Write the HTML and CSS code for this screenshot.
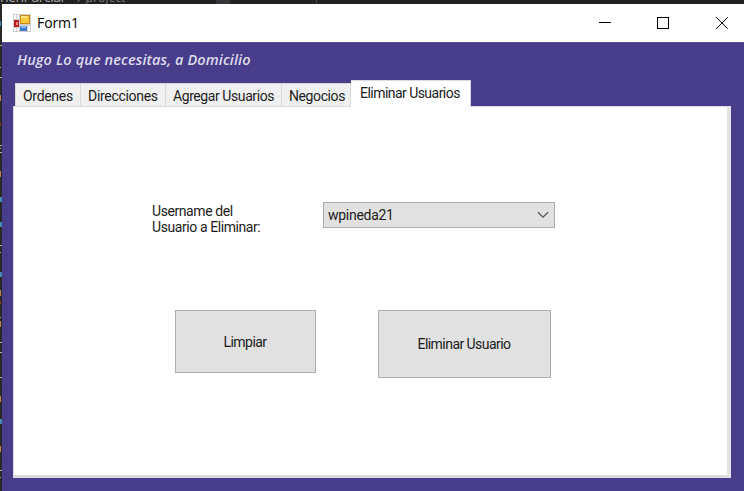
FILE: index.html
```html
<!DOCTYPE html>
<html lang="es">
<head>
<meta charset="utf-8">
<title>Form1</title>
<link rel="stylesheet" href="styles.css">
</head>
<body>
<div class="editor-top"><span class="file">nenParcial</span><span class="path">/ project</span></div>
<div class="desk">
  <svg class="editor-edge" width="2" height="487" viewBox="0 4 2 487" shape-rendering="crispEdges">
    <path stroke="#aaa" stroke-width="1" d="M0 45.500h2M0 67.500h1M0 77.500h2M0 145.500h2M0 148.500h1M0 152.500h2M0 245.500h2M0 252.500h1M0 317.500h1M0 342.500h2M0 352.500h2M0 377.500h2M0 470.500h2M0 477.500h1"/>
    <path stroke="#468bb4" stroke-width="5" d="M0 23h1M0 199h2M0 224h2M0 274h2M0 421h2"/>
    <path stroke="#b9824e" stroke-width="6" d="M0 98h1M0 174h1M0 293h1M0 324h1M0 399h1M0 449h1"/>
    <path stroke="#873724" stroke-width="3" d="M0 124h1M0 302h1"/>
  </svg>
  <div class="window">
    <header class="titlebar">
      <svg class="app-icon" width="18" height="18" viewBox="0 0 18 18">
        <rect width="18" height="18" fill="#cfcfcf"/>
        <path fill="#fff" d="M1 1h2v4H1zM4 1h2v4H4zM1 14h2v3H1zM4 14h2v3H4zM15 12h2v5h-2z"/>
        <rect x="7" y="1" width="10" height="9" fill="#c58a19"/>
        <rect x="8" y="2" width="8" height="7" fill="#f8c838"/>
        <path fill="#ffe68b" d="M8 2h6v2H8z"/>
        <rect x="1" y="6" width="5" height="7" fill="#b51f20"/>
        <path fill="#f08a7d" d="M3 8h2v3H3z"/>
        <rect x="7" y="12" width="7" height="5" fill="#3f7bd8"/>
        <path fill="#8bb6f3" d="M8 12h5v2H8z"/>
      </svg>
      <span class="title">Form1</span>
      <svg class="controls" width="132" height="14" viewBox="0 0 132 14" fill="none" stroke="#000">
        <path d="M0 6.500h12"/>
        <rect x="58.500" y="1.500" width="11" height="11"/>
        <path d="M117.200 1.200l11.600 11.600M128.800 1.200l-11.600 11.600"/>
      </svg>
    </header>
    <main class="client">
      <h1 class="slogan">Hugo Lo que necesitas, a Domicilio</h1>
      <nav class="tabs">
        <div class="tab ordenes">Ordenes</div>
        <div class="tab direcciones">Direcciones</div>
        <div class="tab agregar">Agregar Usuarios</div>
        <div class="tab negocios">Negocios</div>
        <div class="tab active">Eliminar Usuarios</div>
      </nav>
      <section class="page">
        <div class="field">
          <div class="label">Username del<br>Usuario a Eliminar:</div>
          <div class="combo"><span>wpineda21</span>
            <svg width="12" height="8" viewBox="0 0 12 8"><path d="M1 1.200l5 5 5-5" fill="none" stroke="#555" stroke-width="1.300"/></svg>
          </div>
        </div>
        <div class="actions">
          <button class="clear">Limpiar</button>
          <button class="remove">Eliminar Usuario</button>
        </div>
      </section>
    </main>
  </div>
</div>
</body>
</html>
```
FILE: styles.css
```css
* { box-sizing: border-box; }
body {
  margin: 0;
  width: 744px;
  height: 491px;
  overflow: hidden;
  background: #222;
  color: #1c1c1c;
  font: 14px/16px Roboto, "Liberation Sans", sans-serif;
}
.editor-top {
  height: 4px;
  overflow: hidden;
  display: flex;
  align-items: flex-end;
  gap: 14px;
  white-space: nowrap;
  background: linear-gradient(90deg, transparent 216px, #36363a 216px 230px, transparent 230px 316px, #444 316px 317px, transparent 317px);
  font: 14px/16px "Open Sans", sans-serif;
  color: #aaa;
}
.editor-top span { height: 15px; }
.file { width: 64px; letter-spacing: -0.5px; }
.path { font-size: 13px; font-style: italic; color: #777; }
.desk { display: flex; height: 487px; }
.editor-edge { flex: none; background: #292929; }
.window { width: 742px; display: flex; flex-direction: column; }
.titlebar {
  height: 38px;
  padding: 0 13px 0 11px;
  display: flex;
  align-items: center;
  background: #fff;
}
.app-icon { flex: none; }
.title {
  margin-left: 6px;
  font: 14px/20px "Open Sans", sans-serif;
  letter-spacing: -0.1px;
  color: #000;
}
.controls { margin-left: auto; }
.client {
  flex: 1;
  padding: 0 13px 12px 11px;
  border-top: 1px solid #5a4f98;
  background: #483d8b;
}
.slogan {
  margin: 0;
  height: 37px;
  padding: 7px 0 0 4px;
  font: italic 600 14.5px/20px "Open Sans", sans-serif;
  letter-spacing: 0.12px;
  color: #dedbea;
  white-space: nowrap;
}
.tabs {
  display: flex;
  align-items: flex-end;
  height: 26px;
  padding-left: 2px;
  white-space: nowrap;
}
.tab {
  height: 23px;
  padding: 4px 0 0 7px;
  border-top: 1px solid #d9d9d9;
  border-right: 1px solid #d9d9d9;
  background: #f0f0f0;
}
.ordenes {
  width: 66px;
  border-left: 1px solid #d9d9d9;
  letter-spacing: -0.3px;
}
.direcciones { width: 85px; letter-spacing: -0.3px; }
.agregar { width: 116px; letter-spacing: -0.42px; }
.negocios { width: 69px; letter-spacing: -0.4px; }
.active {
  width: 120px;
  height: 27px;
  margin-bottom: -1px;
  padding: 4px 0 0 9px;
  border: 1px solid #fff;
  border-top-color: #d9d9e6;
  border-right-color: #d9d9e6;
  border-bottom: 0;
  border-left: 0;
  background: #fff;
  letter-spacing: -0.54px;
  position: relative;
}
.page {
  height: 372px;
  border: solid #dcdcdc;
  border-width: 1px 4px 3px 1px;
  border-right-color: #e3e3e3;
  background: #fff;
}
.field { display: flex; padding: 95px 0 0 138px; }
.label { width: 171px; padding-top: 1px; letter-spacing: -0.42px; }
.combo {
  width: 232px;
  height: 26px;
  padding: 0 5px 0 4px;
  display: flex;
  align-items: center;
  justify-content: space-between;
  border: 1px solid #adadad;
  background: #e1e1e1;
  letter-spacing: -0.28px;
}
.actions { display: flex; align-items: flex-start; padding: 75px 0 0 161px; gap: 62px; }
button {
  padding: 0 1px 0 0;
  border: 1px solid #adadad;
  background: #e1e1e1;
  color: #1c1c1c;
  font: inherit;
  letter-spacing: -0.55px;
}
.clear { width: 141px; height: 63px; }
.remove { width: 173px; height: 68px; }
```
